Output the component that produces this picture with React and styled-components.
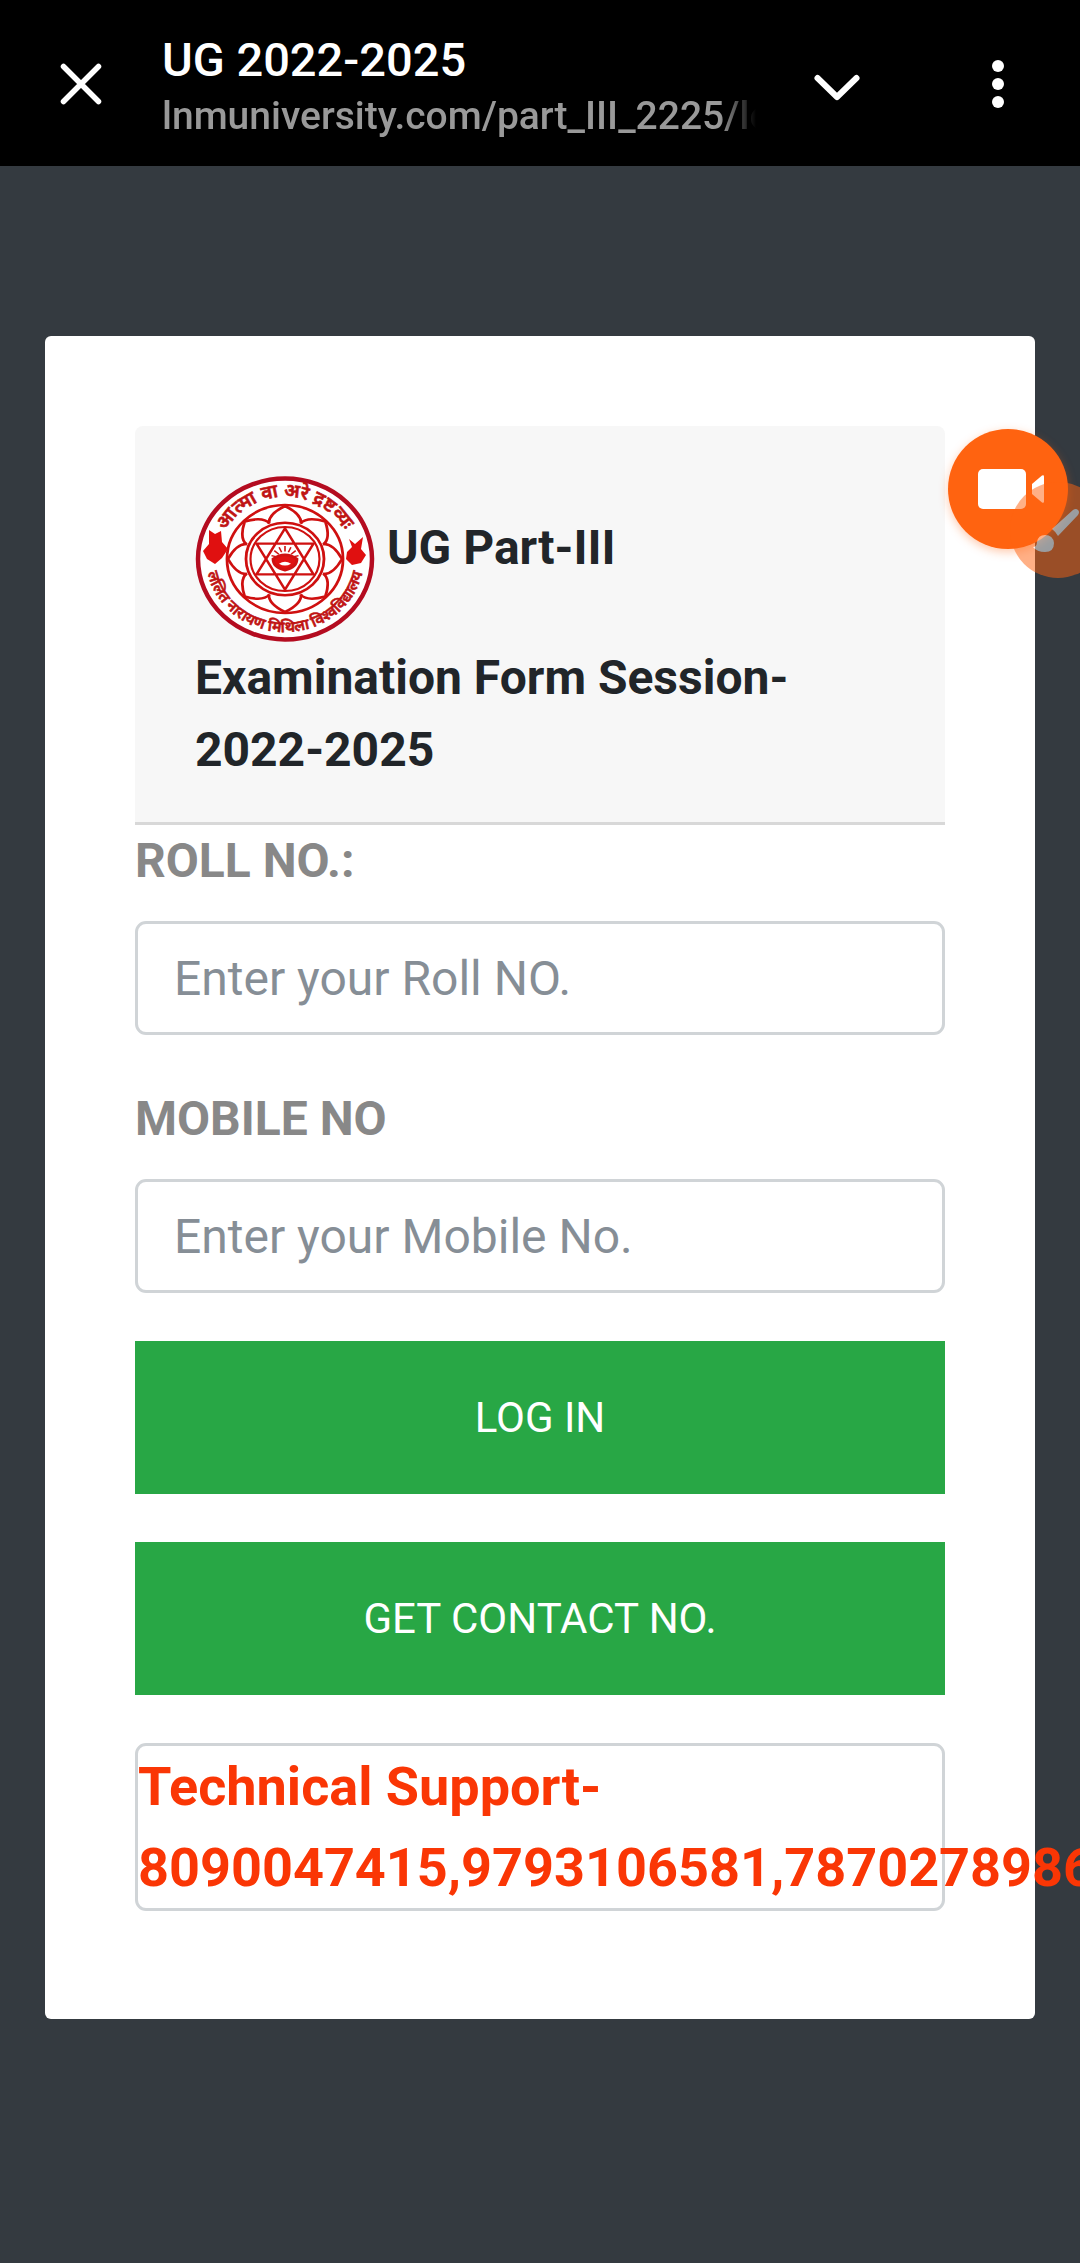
import React from "react";
import styled, { createGlobalStyle } from "styled-components";

const GlobalStyle = createGlobalStyle`
  * {
    box-sizing: border-box;
  }
  body {
    margin: 0;
    background: #343a40;
    color: #212529;
    font-family: Roboto, "Noto Sans", sans-serif;
    font-size: 48px;
    line-height: 72px;
    overflow-x: hidden;
  }
`;

const Page = styled.div`
  position: relative;
  min-height: 100vh;
  overflow: hidden;
`;

const Toolbar = styled.header`
  display: flex;
  align-items: center;
  height: 166px;
  padding: 0 48px 0 54px;
  background: #000;
`;

const IconButton = styled.button`
  display: flex;
  flex: none;
  padding: 0;
  border: 0;
  background: none;
  color: #fff;
  cursor: pointer;
`;

const Address = styled.div`
  flex: 1;
  min-width: 0;
  margin: 0 54px;
  padding-top: 6px;
`;

const PageTitle = styled.div`
  color: #fff;
  font-size: 47px;
  font-weight: 500;
  line-height: 60px;
`;

const PageUrl = styled.div`
  overflow: hidden;
  color: #999;
  font-size: 39px;
  font-weight: 500;
  line-height: 52px;
  white-space: nowrap;
  mask-image: linear-gradient(to right, #000 calc(100% - 36px), transparent);
`;

const ToolbarActions = styled.div`
  display: flex;
  align-items: center;
  gap: 100px;
`;

const Card = styled.main`
  margin: 170px 45px 0;
  padding: 90px 90px 108px;
  border-radius: 6px;
  background: #fff;
`;

const CardHeader = styled.div`
  padding: 34px 60px 36px;
  border-bottom: 3px solid #d8d8d8;
  border-radius: 8px 8px 0 0;
  background: #f7f7f7;
`;

const Heading = styled.h1`
  margin: 0;
  font-size: 48px;
  font-weight: 700;
  line-height: 72px;

  svg {
    vertical-align: middle;
  }
`;

const Form = styled.form`
  display: flex;
  flex-direction: column;
  gap: 48px;
`;

const Field = styled.div`
  display: flex;
  flex-direction: column;
  gap: 24px;
`;

const Label = styled.label`
  color: #888;
  font-weight: 700;
`;

const Input = styled.input`
  width: 100%;
  height: 114px;
  padding: 0 36px;
  border: 3px solid #d0d4d7;
  border-radius: 11px;
  background: #fff;
  color: #495057;
  font: inherit;

  &::placeholder {
    color: #868e96;
    opacity: 1;
  }
`;

const SubmitButton = styled.button`
  height: 153px;
  border: 0;
  background: #28a745;
  color: #fff;
  font-family: inherit;
  font-size: 42px;
  text-transform: uppercase;
  cursor: pointer;
`;

const Support = styled.div`
  border: 3px solid #d0d4d7;
  border-radius: 11px;
  color: #fa3605;
  font-size: 54px;
  font-weight: 700;
  line-height: 81px;
`;

// floating recorder bubbles, they hover over the page
const Bubble = styled.button`
  position: absolute;
  top: ${({ $top }) => $top}px;
  right: ${({ $right }) => $right}px;
  display: flex;
  padding: 0;
  border: 0;
  border-radius: 50%;
  background: #ff6310;
  opacity: ${({ $faded }) => ($faded ? 0.5 : 1)};
  box-shadow: ${({ $faded }) =>
    $faded ? "none" : "0 3px 10px rgba(255, 99, 16, 0.35)"};
`;

const CloseIcon = () => (
  <svg width="54" height="54" viewBox="0 0 54 54" fill="none">
    <path
      d="M9.500 10.500L44.500 45.500M44.500 10.500L9.500 45.500"
      stroke="currentColor"
      strokeWidth="5.500"
      strokeLinecap="round"
    />
  </svg>
);

const ChevronIcon = () => (
  <svg width="54" height="54" viewBox="0 0 54 54" fill="none">
    <path
      d="M7.500 22L27 41L46.500 22"
      stroke="currentColor"
      strokeWidth="6"
      strokeLinecap="round"
      strokeLinejoin="round"
    />
  </svg>
);

const DotsIcon = () => (
  <svg width="68" height="54" viewBox="0 0 68 54" fill="currentColor">
    <circle cx="34" cy="10" r="6" />
    <circle cx="34" cy="28" r="6" />
    <circle cx="34" cy="46" r="6" />
  </svg>
);

const CameraIcon = () => (
  <svg width="120" height="120" viewBox="0 0 120 120" fill="#fff">
    <rect x="30" y="40" width="48" height="40" rx="5" />
    <path d="M84 55l10-8.500q2-1 2 1v25q0 2-2 1l-10-8.500z" />
  </svg>
);

const BrushIcon = () => (
  <svg width="96" height="96" viewBox="0 0 96 96" fill="#fff">
    <path d="M42 47L63 28q3-2 5 0t0 5L48 54q-2-4-6-7z" />
    <path d="M23 65q4 0 4-5 1-7 8-7 8 0 9 8 0 9-9 9-8 0-12-5z" />
  </svg>
);

const petals = Array.from({ length: 8 }, (_, i) => i * 45);
const rays = [-75, -50, -25, 0, 25, 50, 75];

const Emblem = () => (
  <svg
    width="180"
    height="182"
    viewBox="0 0 180 182"
    role="img"
    aria-label="University emblem"
  >
    <defs>
      <path id="motto" d="M24 98A66 61 0 0 1 156 98" />
      <path id="name" d="M11 98A79 74 0 0 0 169 98" />
    </defs>
    <g fill="none" stroke="#cf1010">
      <ellipse cx="90" cy="99" rx="87" ry="80.500" fill="#fff" stroke="#b40c20" strokeWidth="4.500" />
      <g transform="translate(90 99) scale(1 .93)" strokeWidth="2.800">
        <circle r="58" />
        <circle r="39" />
        <circle r="34.500" strokeWidth="2.200" />
        {petals.map((angle) => (
          <path
            key={angle}
            d="M-16 -38Q-17 -48 0 -57Q17 -48 16 -38"
            transform={`rotate(${angle})`}
          />
        ))}
        <path d="M0 -33L28.500 16.500H-28.500ZM0 33L-28.500 -16.500H28.500Z" strokeWidth="2.500" />
        <path d="M-12 0Q0 -9 12 0Q12 9 0 12Q-12 9 -12 0Z" fill="#e01010" />
        <path d="M-6 5Q0 1 6 5Q0 9 -6 5Z" fill="#fff" stroke="none" />
        {rays.map((angle) => (
          <path key={angle} d="M0 -8V-14" transform={`rotate(${angle})`} strokeWidth="1.600" />
        ))}
      </g>
    </g>
    <g fill="#e01010">
      <path d="M14 70L20 74L26 71L27 82L33 89L27 98L20 104L12 99L8 91L14 84Z" />
      <path d="M154 79L160 84L168 77L166 89L171 95L166 103L157 105L151 99L152 92L157 87Z" />
    </g>
    <g
      fill="#c01414"
      stroke="#c01414"
      strokeWidth="0.6"
      fontFamily='"Noto Sans", sans-serif'
      fontWeight="600"
      textAnchor="middle"
    >
      <text fontSize="19">
        <textPath href="#motto" startOffset="50%">
          आत्मा वा अरे द्रष्टव्यः
        </textPath>
      </text>
      <text fontSize="15">
        <textPath href="#name" startOffset="50%">
          ललित नारायण मिथिला विश्वविद्यालय
        </textPath>
      </text>
    </g>
  </svg>
);

const App = () => {
  return (
    <Page>
      <GlobalStyle />
      <Toolbar>
        <IconButton aria-label="Close">
          <CloseIcon />
        </IconButton>
        <Address>
          <PageTitle>UG 2022-2025</PageTitle>
          <PageUrl>lnmuniversity.com/part_III_2225/login</PageUrl>
        </Address>
        <ToolbarActions>
          <IconButton aria-label="Minimise">
            <ChevronIcon />
          </IconButton>
          <IconButton aria-label="More options">
            <DotsIcon />
          </IconButton>
        </ToolbarActions>
      </Toolbar>
      <Card>
        <CardHeader>
          <Heading>
            <Emblem /> UG Part-III Examination Form Session- 2022-2025
          </Heading>
        </CardHeader>
        <Form onSubmit={(e) => e.preventDefault()}>
          <Field>
            <Label htmlFor="roll">ROLL NO.:</Label>
            <Input id="roll" type="text" placeholder="Enter your Roll NO." />
          </Field>
          <Field>
            <Label htmlFor="mobile">MOBILE NO</Label>
            <Input id="mobile" type="tel" placeholder="Enter your Mobile No." />
          </Field>
          <SubmitButton type="submit">Log In</SubmitButton>
          <SubmitButton type="button">Get Contact No.</SubmitButton>
          <Support>Technical Support- 8090047415,9793106581,7870278986</Support>
        </Form>
      </Card>
      <Bubble $top={429} $right={12} aria-label="Record video">
        <CameraIcon />
      </Bubble>
      <Bubble $top={482} $right={-26} $faded aria-label="Draw">
        <BrushIcon />
      </Bubble>
    </Page>
  );
};

export default App;
